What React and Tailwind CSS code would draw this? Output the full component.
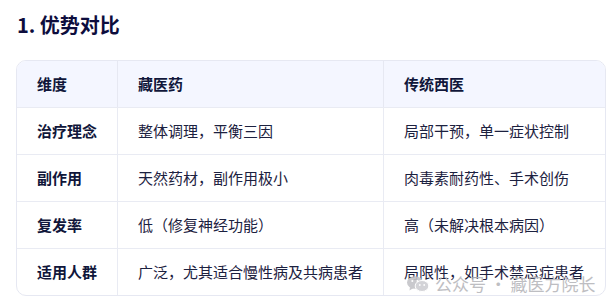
import React from "react";

const rows = [
  ["治疗理念", "整体调理，平衡三因", "局部干预，单一症状控制"],
  ["副作用", "天然药材，副作用极小", "肉毒素耐药性、手术创伤"],
  ["复发率", "低（修复神经功能）", "高（未解决根本病因）"],
  ["适用人群", "广泛，尤其适合慢性病及共病患者", "局限性，如手术禁忌症患者"],
];

const font = { fontFamily: '"Noto Sans CJK SC", "Noto Sans", sans-serif' };

const WeChatIcon = () => (
  <svg width="22" height="16" viewBox="0 0 22 16" fill="#c4c4c8">
    <ellipse cx="8" cy="6.5" rx="8" ry="6.3" />
    <path d="M3 11 L2.5 14.5 L6.5 12 Z" />
    <ellipse cx="15" cy="10" rx="6.8" ry="5.5" fill="#cfcfd3" stroke="#fff" strokeWidth="1" />
    <circle cx="5.3" cy="5" r="1" fill="#fff" />
    <circle cx="10.5" cy="5" r="1" fill="#fff" />
    <circle cx="12.8" cy="9" r="0.9" fill="#fff" />
    <circle cx="17.2" cy="9" r="0.9" fill="#fff" />
  </svg>
);

const App = () => {
  return (
    <div className="w-[616px] h-[307px] bg-white relative overflow-hidden" style={font}>
      <h1 className="pl-[17px] pt-[11px] text-[20px] leading-[28px] font-bold text-[#0d0d3d]">
        1. 优势对比
      </h1>

      <div className="ml-4 mt-[21px] w-[590px] border border-[#e6e8f2] rounded-[10px] overflow-hidden">
        <div className="grid grid-cols-[100px_266px_1fr] bg-[#f4f6ff] h-[46px] items-center text-[15px] font-bold text-[#10163a]">
          <div className="pl-5 h-full flex items-center">维度</div>
          <div className="pl-5 h-full flex items-center border-l border-[#e6e8f2]">藏医药</div>
          <div className="pl-5 h-full flex items-center border-l border-[#e6e8f2]">传统西医</div>
        </div>
        {rows.map((r) => (
          <div
            key={r[0]}
            className="grid grid-cols-[100px_266px_1fr] h-[47px] border-t border-[#e9ebf3] text-[15px] text-[#1c2140]"
          >
            <div className="pl-5 flex items-center font-bold text-[#10163a]">{r[0]}</div>
            <div className="pl-5 flex items-center border-l border-[#e9ebf3]">{r[1]}</div>
            <div className="pl-5 flex items-center border-l border-[#e9ebf3]">{r[2]}</div>
          </div>
        ))}
      </div>

      <div className="absolute left-[407px] top-[274px] flex items-center gap-[6px] text-[17px] leading-[20px] text-[#b8b8bc] opacity-90">
        <WeChatIcon />
        <span>公众号 · 藏医方院长</span>
      </div>
    </div>
  );
};

export default App;
